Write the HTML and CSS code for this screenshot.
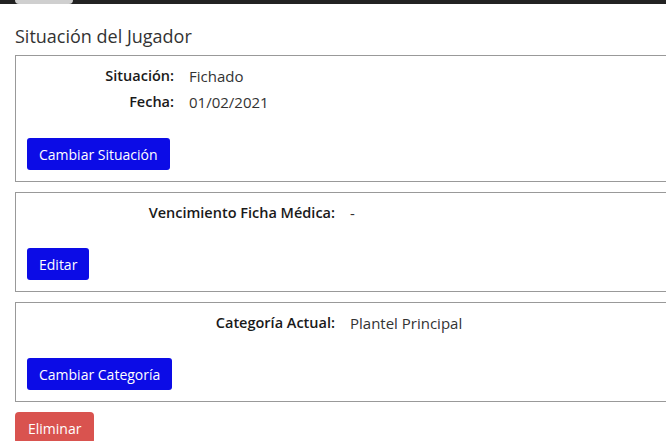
FILE: index.html
```html
<!DOCTYPE html>
<html lang="es">
<head>
    <meta charset="UTF-8">
    <title>Situación del Jugador</title>
    <link rel="stylesheet" href="styles.css">
</head>
<body>
    <div class="topbar">
        <div class="thumb"></div>
    </div>
    <div class="page">
        <h3 class="title">Situación del Jugador</h3>

        <div class="card">
            <div class="row narrow">
                <span class="label">Situación:</span>
                <span class="value">Fichado</span>
            </div>
            <div class="row narrow">
                <span class="label">Fecha:</span>
                <span class="value">01/02/2021</span>
            </div>
            <button class="btn btn-blue first" type="button">Cambiar Situación</button>
        </div>

        <div class="card">
            <div class="row wide">
                <span class="label">Vencimiento Ficha Médica:</span>
                <span class="value">-</span>
            </div>
            <button class="btn btn-blue" type="button">Editar</button>
        </div>

        <div class="card">
            <div class="row wide">
                <span class="label">Categoría Actual:</span>
                <span class="value">Plantel Principal</span>
            </div>
            <button class="btn btn-blue" type="button">Cambiar Categoría</button>
        </div>

        <button class="btn btn-red" type="button">Eliminar</button>
    </div>
</body>
</html>
```

FILE: styles.css
```css
body {
    margin: 0;
    background-color: #fff;
    font-family: "Open Sans", "Noto Sans", sans-serif;
    font-size: 14px;
    color: #333;
    overflow: hidden;
}
.topbar {
    height: 4px;
    background-color: #222;
    padding-left: 15px;
}
.thumb {
    width: 58px;
    height: 4px;
    background-color: #cfcfcf;
    border-radius: 0 0 5px 5px;
}
.page {
    margin: 0 -20px 0 15px;
}
.title {
    margin: 0;
    padding-top: 20px;
    height: 31px;
    font-size: 18px;
    font-weight: 400;
    color: #333;
}
.card {
    border: 1px solid #999;
    padding: 7px 11px 11px;
    margin-bottom: 10px;
}
.row {
    display: flex;
    height: 26px;
    line-height: 26px;
}
.row .label {
    text-align: right;
    font-size: 14.5px;
    font-weight: 600;
    color: #1a1a1a;
}
.row .value {
    padding-left: 15px;
    font-size: 15px;
}
.narrow .label {
    width: 147px;
}
.wide .label {
    width: 308px;
}
.card .btn {
    margin-top: 22px;
}
.card .btn.first {
    margin-top: 23px;
}
.btn {
    display: block;
    height: 32px;
    padding: 0 12px;
    font-family: "Open Sans", "Noto Sans", sans-serif;
    font-size: 14px;
    color: #fff;
    border: none;
    border-radius: 3px;
}
.btn-blue {
    background-color: #0c0ce6;
}
.btn-red {
    background-color: #d9534f;
    border-radius: 4px;
    padding: 0 13px;
}
```
